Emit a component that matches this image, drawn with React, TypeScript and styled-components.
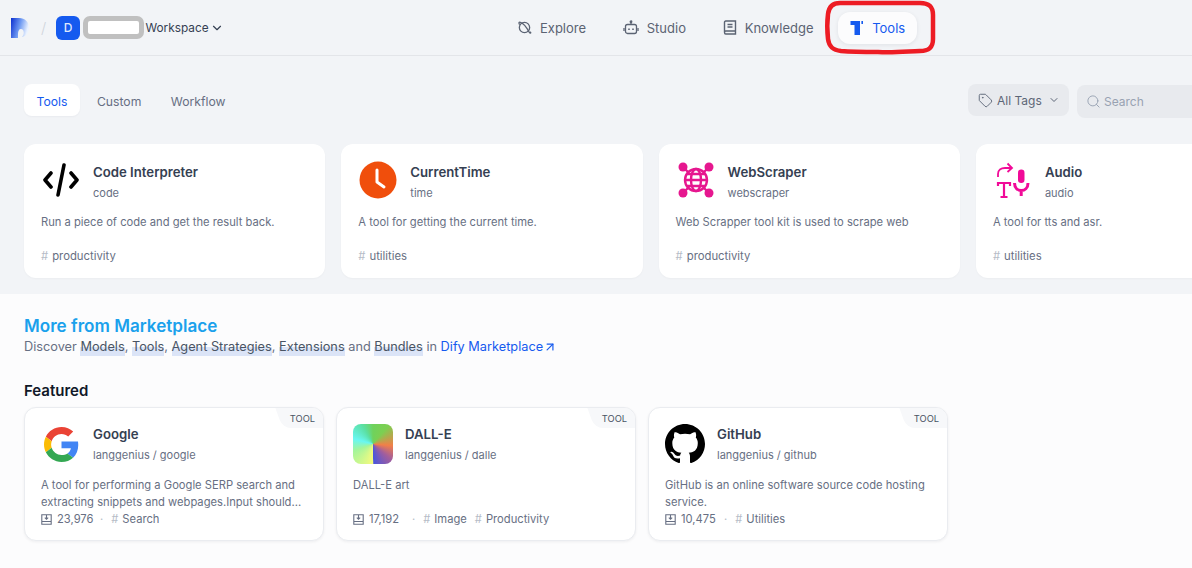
import React from "react";
import styled, { createGlobalStyle } from "styled-components";
import { ArrowUpRight, ChevronDown, Search, Tag } from "lucide-react";

const Global = createGlobalStyle`
  html, body { margin: 0; padding: 0; width: 1192px; height: 568px; overflow: hidden; background: #f2f4f7; }
  * { box-sizing: border-box; }
  body { font-family: Inter, "Noto Sans", sans-serif; color: #354052; }
  svg { flex: none; }
`;

const Page = styled.div`width: 1302px; height: 568px; overflow: hidden; display: flex; flex-direction: column;`;

const Header = styled.header`
  position: relative; height: 56px; flex: none; display: flex; align-items: center;
  border-bottom: 1px solid #e3e5e9; padding-left: 10px;
`;
const Brand = styled.div`width: 495px; flex: none; display: flex; align-items: center;`;
const Slash = styled.span`width: 10px; height: 14px; margin: 0 5px 0 11px; color: #d0d5dc; font-size: 15px; line-height: 14px; font-weight: 300;`;
const Avatar = styled.div`
  width: 24px; height: 24px; border-radius: 6px; background: #155aef; color: #dfe8fd;
  font-size: 12px; font-weight: 500; display: flex; align-items: center; justify-content: center;
`;
const Redacted = styled.div`width: 61px; height: 23px; margin: 0 1.5px 0 3px; background: #fff; border: 5px solid #c0c0c0; border-radius: 7px;`;
const WorkspaceName = styled.span`font-size: 11.8px; padding-top: 1px; color: #354052; display: flex; align-items: center; gap: 1px;`;
const Nav = styled.nav`display: flex; gap: 12.7px; align-items: center;`;
const NavItem = styled.a<{ $active?: boolean }>`
  height: 32px; padding: 0 12px; display: flex; align-items: center; gap: 8px; border-radius: 12px;
  font-size: 13px; font-weight: 400; color: ${p => (p.$active ? "#155aef" : "#5b6373")};
  background: ${p => (p.$active ? "#fcfcfd" : "transparent")};
  box-shadow: ${p => (p.$active ? "0 1px 4px rgba(16,24,40,.08)" : "none")};
`;
const Scribble = styled.svg`position: absolute; left: 822px; top: 0; width: 116px; height: 56px; pointer-events: none;`;

const Toolbar = styled.div`height: 88px; flex: none; padding: 28px 24px; display: flex; justify-content: space-between;`;
const Tabs = styled.div`display: flex; align-items: center;`;
const TabItem = styled.span<{ $active?: boolean }>`
  height: 32px; padding: 2px 12.5px 0; margin-right: 4.5px; display: flex; align-items: center; border-radius: 8px;
  font-size: 12.2px; color: ${p => (p.$active ? "#155aef" : "#676f83")};
  background: ${p => (p.$active ? "#fff" : "transparent")};
  box-shadow: ${p => (p.$active ? "0 1px 2px rgba(16,24,40,.04)" : "none")};
`;
const Filters = styled.div`display: flex; gap: 8px; width: 310px; flex: none;`;
const TagFilter = styled.div`
  width: 101px; height: 32px; padding: 0 8px 0 10px; border-radius: 8px; background: #e8eaee; color: #5d6677; white-space: nowrap;
  display: flex; align-items: center; gap: 4px; font-size: 12px; flex: none;
`;
const TagCaret = styled.span`display: flex; margin-left: 2px;`;
const SearchBox = styled.div`
  flex: 1; height: 33px; margin-top: 1px; padding: 0 9px; border-radius: 8px; background: #e8eaee; color: #98a2b2;
  display: flex; align-items: center; gap: 3px; font-size: 12px;
`;

const ToolGrid = styled.div`display: grid; grid-template-columns: repeat(4, 301.3px); gap: 16px; padding: 0 24px; flex: none;`;
const ToolCard = styled.article`height: 134px; background: #fff; border-radius: 12px; padding: 16px 17px; display: flex; flex-direction: column; box-shadow: 0 1px 2px rgba(16,24,40,.03);`;
const CardHead = styled.div`display: flex; gap: 12px; height: 40px; flex: none;`;
const IconSlot = styled.div`width: 40px; height: 40px; flex: none; display: flex; align-items: center; justify-content: center;`;
const Heading = styled.div<{ $tight?: boolean }>`display: flex; flex-direction: column; min-width: 0; margin-top: ${p => (p.$tight ? "0" : "2px")};`;
const Name = styled.div`font-size: 13.2px; line-height: 20px; font-weight: 600; color: #354052;`;
const Org = styled.div`font-size: 11px; line-height: 16px; color: #676f83; margin-top: 3px;`;
const ToolDesc = styled.p`margin: 14px 0 0; font-size: 11.2px; line-height: 16px; color: #676f83;`;
const TagRow = styled.div`margin-top: auto; margin-bottom: -2px; display: flex; gap: 12px; font-size: 11.3px; line-height: 16px; color: #676f83;`;
const Hash = styled.span`color: #b6bcc7; margin-right: 4px;`;

const Market = styled.section`flex: 1; margin-top: 16px; background: #fcfcfd; padding: 21px 24px 0;`;
const MarketTitle = styled.h2`margin: 0; font-size: 17.1px; line-height: 22px; font-weight: 600; color: #1aa1ec;`;
const MarketSub = styled.p`margin: 0; display: flex; align-items: center; font-size: 12.75px; line-height: 20px; color: #676f83; white-space: pre;`;
const Mark = styled.span`color: #495464; background: linear-gradient(transparent 50%, #dbe4f7 50%, #dbe4f7 95%, transparent 95%);`;
const MarketLink = styled.a`color: #155aef; display: inline-flex; align-items: center;`;
const Featured = styled.h3`margin: 24px 0 6px; font-size: 15px; line-height: 20px; font-weight: 600; color: #101828;`;
const PluginGrid = styled.div`display: grid; grid-template-columns: repeat(3, 300px); gap: 12px;`;
const PluginCard = styled.article`
  position: relative; height: 134px; background: #fff; border: 1px solid #eaecf0; border-radius: 12px; overflow: hidden;
  padding: 16px 16px 8px; display: flex; flex-direction: column; box-shadow: 0 1px 3px rgba(16,24,40,.06);
`;
const Corner = styled.span`
  position: absolute; right: 0; top: 0; height: 20px; padding: 0 8px 0 11px;
  font-size: 9.3px; line-height: 21px; color: #495464;
  &::before {
    content: ""; position: absolute; inset: 0 -12px 0 0; z-index: 0; background: #f7f8fa;
    border-bottom-left-radius: 8px; transform: skewX(20deg);
  }
`;
const CornerText = styled.span`position: relative;`;
const PluginDesc = styled.p`margin: 13px 0 0; height: 34px; flex: none; font-size: 11.2px; line-height: 17px; color: #676f83; overflow: hidden;`;
const Stats = styled.div`margin-top: -1px; display: flex; align-items: center; font-size: 11.2px; line-height: 18px; color: #676f83; gap: 8px;`;
const Count = styled.span`width: 51px; display: flex; align-items: center; gap: 5px;`;
const Dot = styled.span`color: #b6bcc7;`;
const ColorTile = styled.div`
  width: 40px; height: 40px; border-radius: 8px;
  background: conic-gradient(#6fd25c 0deg, #7ccf52 40deg, #f27f48 95deg, #a35e9c 130deg, #4a55dc 178deg, #f6fa7e 180deg, #a4f59b 250deg, #69f7f2 285deg, #5be0a4 330deg, #6fd25c 360deg);
`;
const CodeIcon = () => (
  <svg width="38" height="34" viewBox="0 0 38 34" fill="none" stroke="#000" strokeWidth="3.6" strokeLinecap="round" strokeLinejoin="round">
    <path d="M9 10 3 17l6 7M29 10l6 7-6 7M22 2l-6 30" />
  </svg>
);
const ClockIcon = () => (
  <svg width="38" height="38" viewBox="0 0 38 38">
    <circle cx="19" cy="19" r="18.500" fill="#f04e0c" />
    <path d="M18 9v12l7 5" fill="none" stroke="#fff" strokeWidth="3" strokeLinecap="round" strokeLinejoin="round" />
  </svg>
);
const WebIcon = () => (
  <svg width="36" height="36" viewBox="0 0 36 36" fill="none" stroke="#e6178f" strokeWidth="2.400">
    <circle cx="18" cy="18" r="11" />
    <ellipse cx="18" cy="18" rx="5" ry="11" />
    <path d="M7 18h22M9 12h18M9 24h18" />
    <g fill="#e6178f" stroke="none">
      <circle cx="5" cy="5" r="4.500" /><circle cx="31" cy="5" r="4.500" /><circle cx="5" cy="31" r="4.500" /><circle cx="31" cy="31" r="4.500" />
    </g>
    <path d="m7 7 4 4M29 7l-4 4M7 29l4-4M29 29l-4-4" />
  </svg>
);
const AudioIcon = () => (
  <svg width="40" height="40" viewBox="0 0 40 40" fill="none" stroke="#f10a98" strokeWidth="2.200">
    <path d="M5 17v-3c0-4 3-6 7-6h7M14.500 3.500 19 8l-4.500 4" strokeWidth="1.800" />
    <path d="M5 26v-3h12v3M11 23v14M7.500 37h7" />
    <rect x="25" y="9.500" width="6.500" height="13.500" rx="3.200" fill="#f10a98" stroke="none" />
    <path d="M21.500 23c0 10 13.500 10 13.500 0M28.200 30v6" strokeWidth="3" />
  </svg>
);
const GoogleIcon = () => (
  <svg width="35" height="35" viewBox="0 0 48 48">
    <path fill="#EA4335" d="M24 9.500c3.540 0 6.710 1.220 9.210 3.600l6.850-6.850C35.900 2.380 30.470 0 24 0 14.620 0 6.510 5.380 2.560 13.220l7.980 6.190C12.430 13.720 17.740 9.500 24 9.500z" />
    <path fill="#4285F4" d="M46.980 24.550c0-1.570-.15-3.090-.38-4.550H24v9.020h12.940c-.58 2.960-2.260 5.480-4.780 7.180l7.730 6c4.510-4.180 7.090-10.360 7.090-17.650z" />
    <path fill="#FBBC05" d="M10.530 28.590c-.48-1.450-.76-2.990-.76-4.590s.27-3.140.76-4.590l-7.980-6.190C.92 16.460 0 20.120 0 24c0 3.880.92 7.540 2.560 10.780l7.970-6.190z" />
    <path fill="#34A853" d="M24 48c6.480 0 11.930-2.130 15.890-5.810l-7.730-6c-2.150 1.450-4.920 2.300-8.160 2.300-6.260 0-11.570-4.220-13.470-9.910l-7.980 6.190C6.510 42.620 14.620 48 24 48z" />
  </svg>
);
const GithubIcon = () => (
  <svg width="40" height="40" viewBox="0 0 16 16">
    <path fill="#000" d="M8 0C3.580 0 0 3.580 0 8c0 3.540 2.290 6.530 5.470 7.590.4.070.55-.17.55-.38 0-.19-.01-.82-.01-1.490-2.010.37-2.530-.49-2.690-.94-.09-.23-.48-.94-.82-1.130-.28-.15-.68-.52-.01-.53.63-.01 1.080.58 1.230.82.72 1.210 1.870.87 2.330.66.07-.52.28-.87.51-1.070-1.780-.2-3.640-.89-3.640-3.950 0-.87.31-1.590.82-2.150-.08-.2-.36-1.020.08-2.120 0 0 .67-.21 2.200.82.64-.18 1.320-.27 2-.27.68 0 1.360.09 2 .27 1.530-1.040 2.200-.82 2.200-.82.44 1.100.16 1.920.08 2.120.51.56.82 1.270.82 2.150 0 3.070-1.870 3.750-3.650 3.950.29.25.54.73.54 1.480 0 1.070-.01 1.930-.01 2.200 0 .21.15.46.55.38A8.013 8.013 0 0016 8c0-4.420-3.580-8-8-8z" />
  </svg>
);
const Logo = () => (
  <svg width="20" height="22" viewBox="0 0 20 22">
    <defs>
      <linearGradient id="lg" x1="0" y1="0" x2="1" y2="0.300">
        <stop offset="0" stopColor="#0b2fd0" /><stop offset=".55" stopColor="#6f9af2" /><stop offset="1" stopColor="#eaf2ff" />
      </linearGradient>
    </defs>
    <path fill="url(#lg)" d="M1 1h8c6 0 10 4 10 9.500S15 20 12 20c3-3 2-8-1-8-2 0-3 2-3 5v4H1z" />
  </svg>
);
const ExploreIcon = () => (
  <svg width="15" height="15" viewBox="0 0 16 16" fill="none" stroke="#5b6373" strokeWidth="1.400" strokeLinecap="round">
    <circle cx="8" cy="8" r="5.500" /><path d="M3.500 2.500c2 .5 6 4 9.500 10.500 1 1.500 2 1 1.500 0M3.500 2.500c-1-.5-2 0-1 2" />
  </svg>
);
const StudioIcon = () => (
  <svg width="16" height="16" viewBox="0 0 16 16" fill="none" stroke="#5b6373" strokeWidth="1.300">
    <rect x="2.500" y="4.500" width="11" height="9" rx="2" /><path d="M8 4.500V2M1 8v3M15 8v3" />
    <circle cx="8" cy="1.800" r=".8" fill="#5b6373" />
    <path d="M6 8.500v1.500M10 8.500v1.500" strokeWidth="1.600" />
  </svg>
);
const BookIcon = () => (
  <svg width="14" height="15" viewBox="0 0 14 15" fill="none" stroke="#5b6373" strokeWidth="1.400">
    <path d="M1.500 12.200V2.200c0-.6.5-1.200 1.200-1.200h9.800v10H2.700c-.7 0-1.200.5-1.200 1.200s.5 1.800 1.200 1.800h9.800v-3" />
    <path d="M4.500 4.500h5M4.500 7h5" />
  </svg>
);
const ToolsIcon = () => (
  <svg width="14" height="14" viewBox="0 0 14 14" fill="#155aef">
    <path d="M0.500 0H10V14H4.500V4H0.500zM11.400 0H13V3H11.400z" />
  </svg>
);
const InstallIcon = () => (
  <svg width="11" height="11" viewBox="0 0 11 11" fill="none" stroke="#676f83" strokeWidth="1.100">
    <path d="M.8.800h9.400v9.400H.8zM.8 7.500h9.400M5.500 1v4M3.800 3.700 5.500 5.200l1.700-1.500" />
  </svg>
);

const tools = [
  { name: "Code Interpreter", org: "code", desc: "Run a piece of code and get the result back.", tag: "productivity", icon: <CodeIcon /> },
  { name: "CurrentTime", org: "time", desc: "A tool for getting the current time.", tag: "utilities", icon: <ClockIcon /> },
  { name: "WebScraper", org: "webscraper", desc: "Web Scrapper tool kit is used to scrape web", tag: "productivity", icon: <WebIcon /> },
  { name: "Audio", org: "audio", desc: "A tool for tts and asr.", tag: "utilities", icon: <AudioIcon /> },
];
const plugins = [
  { name: "Google", org: "langgenius / google", desc: "A tool for performing a Google SERP search and extracting snippets and webpages.Input should...", count: "23,976", tags: ["Search"], icon: <GoogleIcon /> },
  { name: "DALL-E", org: "langgenius / dalle", desc: "DALL-E art", count: "17,192", tags: ["Image", "Productivity"], icon: <ColorTile /> },
  { name: "GitHub", org: "langgenius / github", desc: "GitHub is an online software source code hosting service.", count: "10,475", tags: ["Utilities"], icon: <GithubIcon /> },
];

export default function App() {
  return (
    <Page>
      <Global />
      <Header>
        <Brand>
          <Logo />
          <Slash>/</Slash>
          <Avatar>D</Avatar>
          <Redacted />
          <WorkspaceName>Workspace<ChevronDown size={14} strokeWidth={2} /></WorkspaceName>
        </Brand>
        <Nav>
          <NavItem><ExploreIcon />Explore</NavItem>
          <NavItem><StudioIcon />Studio</NavItem>
          <NavItem><BookIcon />Knowledge</NavItem>
          <NavItem $active><ToolsIcon />Tools</NavItem>
        </Nav>
        <Scribble viewBox="0 0 116 56" fill="none">
          <path d="M18 3h80c8 0 13 3 13 12v24c0 9-5 12-13 12-20 1-30 2-42 1-12 0-25 0-37-1-8-1-12-4-13-12-1-9-1-17 0-25 1-8 5-11 12-11z" stroke="#ed1c24" strokeWidth="4.500" />
        </Scribble>
      </Header>
      <Toolbar>
        <Tabs>
          <TabItem $active>Tools</TabItem>
          <TabItem>Custom</TabItem>
          <TabItem>Workflow</TabItem>
        </Tabs>
        <Filters>
          <TagFilter><Tag size={15} strokeWidth={1.5} />All Tags<TagCaret><ChevronDown size={12} /></TagCaret></TagFilter>
          <SearchBox><Search size={15} strokeWidth={1.5} />Search</SearchBox>
        </Filters>
      </Toolbar>
      <ToolGrid>
        {tools.map(t => (
          <ToolCard key={t.name}>
            <CardHead>
              <IconSlot>{t.icon}</IconSlot>
              <Heading><Name>{t.name}</Name><Org>{t.org}</Org></Heading>
            </CardHead>
            <ToolDesc>{t.desc}</ToolDesc>
            <TagRow><span><Hash>#</Hash>{t.tag}</span></TagRow>
          </ToolCard>
        ))}
      </ToolGrid>
      <Market>
        <MarketTitle>More from Marketplace</MarketTitle>
        <MarketSub>
          Discover <Mark>Models</Mark>, <Mark>Tools</Mark>, <Mark>Agent Strategies</Mark>, <Mark>Extensions</Mark> and <Mark>Bundles</Mark> in <MarketLink>Dify Marketplace<ArrowUpRight size={14} /></MarketLink>
        </MarketSub>
        <Featured>Featured</Featured>
        <PluginGrid>
          {plugins.map(p => (
            <PluginCard key={p.name}>
              <Corner><CornerText>TOOL</CornerText></Corner>
              <CardHead>
                <IconSlot>{p.icon}</IconSlot>
                <Heading $tight><Name>{p.name}</Name><Org>{p.org}</Org></Heading>
              </CardHead>
              <PluginDesc>{p.desc}</PluginDesc>
              <Stats>
                <Count><InstallIcon />{p.count}</Count>
                <Dot>·</Dot>
                {p.tags.map(tag => <span key={tag}><Hash>#</Hash>{tag}</span>)}
              </Stats>
            </PluginCard>
          ))}
        </PluginGrid>
      </Market>
    </Page>
  );
}
